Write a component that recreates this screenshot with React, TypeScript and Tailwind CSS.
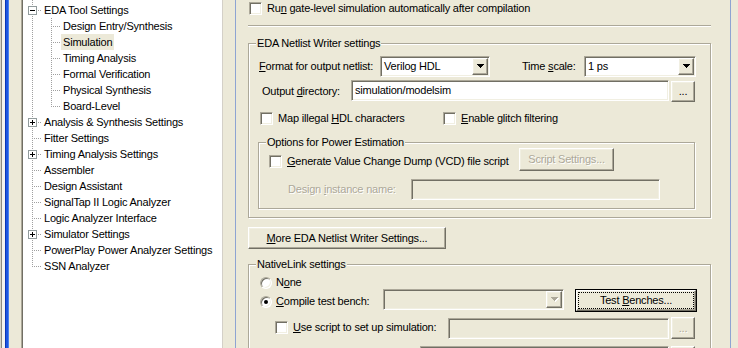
import React from 'react';

type Node = { label: string; level: 0 | 1; exp?: '+' | '-'; last?: boolean; selected?: boolean };

const tree: Node[] = [
  { label: 'EDA Tool Settings', level: 0, exp: '-' },
  { label: 'Design Entry/Synthesis', level: 1 },
  { label: 'Simulation', level: 1, selected: true },
  { label: 'Timing Analysis', level: 1 },
  { label: 'Formal Verification', level: 1 },
  { label: 'Physical Synthesis', level: 1 },
  { label: 'Board-Level', level: 1, last: true },
  { label: 'Analysis & Synthesis Settings', level: 0, exp: '+' },
  { label: 'Fitter Settings', level: 0 },
  { label: 'Timing Analysis Settings', level: 0, exp: '+' },
  { label: 'Assembler', level: 0 },
  { label: 'Design Assistant', level: 0 },
  { label: 'SignalTap II Logic Analyzer', level: 0 },
  { label: 'Logic Analyzer Interface', level: 0 },
  { label: 'Simulator Settings', level: 0, exp: '+' },
  { label: 'PowerPlay Power Analyzer Settings', level: 0 },
  { label: 'SSN Analyzer', level: 0, last: true },
];

const VDOTS =
  'bg-[repeating-linear-gradient(to_bottom,#A0A0A0_0px,#A0A0A0_1px,transparent_1px,transparent_2px)]';
const HDOTS =
  'bg-[repeating-linear-gradient(to_right,#A0A0A0_0px,#A0A0A0_1px,transparent_1px,transparent_2px)]';

function LineCell({ mode, exp }: { mode: 'through' | 'tee' | 'corner'; exp?: '+' | '-' }) {
  return (
    <div className="relative w-[19px] h-[16px] shrink-0">
      <div
        className={`absolute left-[9px] top-0 w-[1px] ${mode === 'corner' ? 'h-[9px]' : 'h-[16px]'} ${VDOTS}`}
      />
      {mode !== 'through' && <div className={`absolute left-[9px] top-[8px] w-[10px] h-[1px] ${HDOTS}`} />}
      {exp && (
        <div className="absolute left-[5px] top-[4px] w-[9px] h-[9px] border border-[#919B9C] bg-white">
          <div className="absolute left-[1px] top-[3px] w-[5px] h-[1px] bg-black" />
          {exp === '+' && <div className="absolute left-[3px] top-[1px] w-[1px] h-[5px] bg-black" />}
        </div>
      )}
    </div>
  );
}

function TreeRow({ n }: { n: Node }) {
  return (
    <div className="flex h-[16px]">
      {n.level === 1 ? (
        <>
          <LineCell mode="through" />
          <LineCell mode={n.last ? 'corner' : 'tee'} />
        </>
      ) : (
        <LineCell mode={n.last ? 'corner' : 'tee'} exp={n.exp} />
      )}
      <span
        className={`px-[2px] h-[16px] leading-[16px] whitespace-nowrap ${n.selected ? 'bg-[#ECE9D8]' : ''}`}
      >
        {n.label}
      </span>
    </div>
  );
}

function CheckBox() {
  return (
    <div className="w-[13px] h-[13px] shrink-0 bg-white border border-t-[#ACA899] border-l-[#ACA899] border-r-white border-b-white shadow-[inset_1px_1px_0_#716F64,inset_-1px_-1px_0_#F1EFE2]" />
  );
}

function Radio({ checked }: { checked?: boolean }) {
  return (
    <div className="relative w-[12px] h-[12px] shrink-0 rounded-full bg-white border border-t-[#ACA899] border-l-[#ACA899] border-r-white border-b-white shadow-[inset_1px_1px_0_#716F64,inset_-1px_-1px_0_#F1EFE2] flex items-center justify-center">
      {checked && <div className="w-[4px] h-[4px] rounded-full bg-black" />}
    </div>
  );
}

const RAISED =
  'bg-[#ECE9D8] border border-t-white border-l-white border-r-[#716F64] border-b-[#716F64] shadow-[inset_-1px_-1px_0_#ACA899,inset_1px_1px_0_#F1EFE2]';
const SUNKEN =
  'border border-t-[#ACA899] border-l-[#ACA899] border-r-white border-b-white shadow-[inset_1px_1px_0_#716F64,inset_-1px_-1px_0_#F1EFE2]';
const DIS = 'text-[#ACA899] [text-shadow:1px_1px_0_#fff]';

function Arrow({ disabled }: { disabled?: boolean }) {
  const d = 'M0 0h7v1h-1v1h-1v1h-1v1h-1v-1h-1v-1h-1v-1h-1z';
  return (
    <svg width="8" height="5" viewBox="0 0 8 5" shapeRendering="crispEdges">
      {disabled && <path d={d} fill="#fff" transform="translate(1 1)" />}
      <path d={d} fill={disabled ? '#ACA899' : '#000'} />
    </svg>
  );
}

function Combo({ className, text, disabled }: { className: string; text?: string; disabled?: boolean }) {
  return (
    <div className={`flex shrink-0 p-[1px] ${SUNKEN} ${disabled ? 'bg-[#ECE9D8]' : 'bg-white'} ${className}`}>
      <div className="flex-1 flex items-center pl-[2px] whitespace-nowrap">{text}</div>
      <div className={`w-[16px] h-full flex items-center justify-center pl-[1px] ${RAISED}`}>
        <Arrow disabled={disabled} />
      </div>
    </div>
  );
}

function Field({ className, text, disabled }: { className: string; text?: string; disabled?: boolean }) {
  return (
    <div
      className={`shrink-0 flex items-center pl-[3px] whitespace-nowrap ${SUNKEN} ${disabled ? 'bg-[#ECE9D8]' : 'bg-white'} ${className}`}
    >
      {text}
    </div>
  );
}

function Btn({ className, children, disabled }: { className: string; children?: React.ReactNode; disabled?: boolean }) {
  return (
    <div className={`shrink-0 flex items-center justify-center whitespace-nowrap ${RAISED} ${disabled ? DIS : ''} ${className}`}>
      {children}
    </div>
  );
}

function Group({ className, label, children }: { className: string; label: string; children: React.ReactNode }) {
  return (
    <div
      className={`relative shrink-0 border border-[#ACA899] shadow-[inset_1px_1px_0_#fff,1px_1px_0_#fff] ${className}`}
    >
      <span className="absolute left-[7px] top-[-7px] px-[1px] bg-[#ECE9D8] leading-[13px] whitespace-nowrap">
        {label}
      </span>
      {children}
    </div>
  );
}

export default function App() {
  return (
    <div className="w-[738px] h-[348px] overflow-hidden flex bg-[#ECE9D8] text-[11px] leading-[13px] text-black font-['Liberation_Sans',Arial,sans-serif] tracking-[-0.2px]">
      {/* left strip */}
      <div className="flex h-full shrink-0">
        <div className="w-[1px] bg-[#D6D3C8]" />
        <div className="w-[1px] bg-[#8C8A80]" />
        <div className="w-[3px] bg-[#F4F3EE]" />
        <div className="w-[1px] bg-[#0A36B8]" />
        <div className="w-[2px] bg-[#1D56E0]" />
        <div className="w-[1px] bg-[#4A80EE]" />
        <div className="w-[12px] bg-[#ECE9D8]" />
      </div>

      {/* tree */}
      <div className="w-[202px] h-full shrink-0 bg-white border-l border-l-[#ACA899] border-r border-r-[#D4D0C8] shadow-[inset_1px_0_0_#716F64] pl-[1px] overflow-hidden">
        <div className="flex h-[2px]">
          <div className="relative w-[19px] h-[2px]">
            <div className={`absolute left-[9px] top-0 w-[1px] h-[2px] ${VDOTS}`} />
          </div>
        </div>
        {tree.map((n, i) => (
          <TreeRow key={i} n={n} />
        ))}
      </div>

      <div className="w-[12px] shrink-0" />

      {/* settings panel */}
      <div className="w-[496px] h-full shrink-0 border-l border-r border-[#8EA4D2] pl-[12px] pr-[19px] overflow-hidden flex flex-col">
        <div className="flex items-center h-[13px] mt-[2px] pl-[1px] shrink-0">
          <CheckBox />
          <span className="ml-[5px] whitespace-nowrap">
            Ru<u>n</u> gate-level simulation automatically after compilation
          </span>
        </div>
        <div className="mt-[10px] h-[2px] shrink-0 border-t border-t-[#ACA899] border-b border-b-white" />

        <Group className="mt-[16px] h-[175px]" label="EDA Netlist Writer settings">
          <div className="mt-[12px] flex items-center h-[21px]">
            <span className="w-[131px] pl-[10px] shrink-0 whitespace-nowrap">
              <u>F</u>ormat for output netlist:
            </span>
            <Combo className="w-[110px] h-[21px]" text="Verilog HDL" />
            <span className="ml-[32px] w-[62px] shrink-0 whitespace-nowrap">
              Time <u>s</u>cale:
            </span>
            <Combo className="w-[112px] h-[21px]" text="1 ps" />
          </div>
          <div className="mt-[3px] flex items-start h-[22px]">
            <span className="w-[102px] pl-[13px] shrink-0 self-center whitespace-nowrap">
              Output <u>d</u>irectory:
            </span>
            <Field className="w-[318px] h-[21px]" text="simulation/modelsim" />
            <Btn className="ml-[2px] mt-[1px] w-[24px] h-[21px]">...</Btn>
          </div>
          <div className="mt-[10px] flex items-center h-[13px] pl-[11px]">
            <div className="flex items-center w-[183px] shrink-0">
              <CheckBox />
              <span className="ml-[5px] whitespace-nowrap">
                Map illegal <u>H</u>DL characters
              </span>
            </div>
            <div className="flex items-center">
              <CheckBox />
              <span className="ml-[5px] whitespace-nowrap">
                <u>E</u>nable glitch filtering
              </span>
            </div>
          </div>

          <Group className="mt-[17px] ml-[9px] w-[437px] h-[67px]" label="Options for Power Estimation">
            <div className="mt-[5px] flex items-start h-[23px]">
              <div className="flex items-center w-[250px] h-[13px] mt-[7px] ml-[10px] shrink-0">
                <CheckBox />
                <span className="ml-[5px] whitespace-nowrap">
                  <u>G</u>enerate Value Change Dump (VCD) file script
                </span>
              </div>
              <Btn className="w-[95px] h-[23px]" disabled>
                <span>Script Settings...</span>
              </Btn>
            </div>
            <div className="mt-[8px] flex items-center h-[21px]">
              <span className={`w-[152px] pl-[29px] shrink-0 whitespace-nowrap ${DIS}`}>
                Design <u>i</u>nstance name:
              </span>
              <Field className="w-[249px] h-[21px]" disabled />
            </div>
          </Group>
        </Group>

        <Btn className="mt-[9px] w-[198px] h-[22px]">
          <span>
            <u>M</u>ore EDA Netlist Writer Settings...
          </span>
        </Btn>

        <Group className="mt-[15px] h-[120px]" label="NativeLink settings">
          <div className="mt-[11px] flex items-center h-[13px] pl-[11px]">
            <Radio />
            <span className="ml-[4px]">
              N<u>o</u>ne
            </span>
          </div>
          <div className="flex items-start h-[23px]">
            <div className="flex items-center w-[123px] h-[13px] mt-[6px] ml-[11px] shrink-0">
              <Radio checked />
              <span className="ml-[4px] whitespace-nowrap">
                <u>C</u>ompile test bench:
              </span>
            </div>
            <Combo className="w-[181px] h-[21px]" disabled />
            <div className="ml-[11px] w-[122px] h-[23px] shrink-0 border border-black">
              <div className={`w-full h-full p-[1px] ${RAISED}`}>
                <div className="w-full h-full border border-dotted border-black flex items-center justify-center whitespace-nowrap">
                  <span>
                    Test <u>B</u>enches...
                  </span>
                </div>
              </div>
            </div>
          </div>
          <div className="mt-[5px] flex items-start h-[23px]">
            <div className="flex items-center w-[173px] h-[13px] mt-[4px] ml-[26px] shrink-0">
              <CheckBox />
              <span className="ml-[5px] whitespace-nowrap">
                <u>U</u>se script to set up simulation:
              </span>
            </div>
            <Field className="mt-[1px] w-[221px] h-[21px]" disabled />
            <Btn className="ml-[2px] w-[24px] h-[22px]" disabled>
              ...
            </Btn>
          </div>
          <div className="mt-[6px] flex items-start h-[22px]">
            <Field className="ml-[171px] w-[249px] h-[21px]" disabled />
            <Btn className="ml-[2px] w-[24px] h-[22px]" disabled />
          </div>
        </Group>
      </div>

      <div className="w-[7px] shrink-0" />
    </div>
  );
}
